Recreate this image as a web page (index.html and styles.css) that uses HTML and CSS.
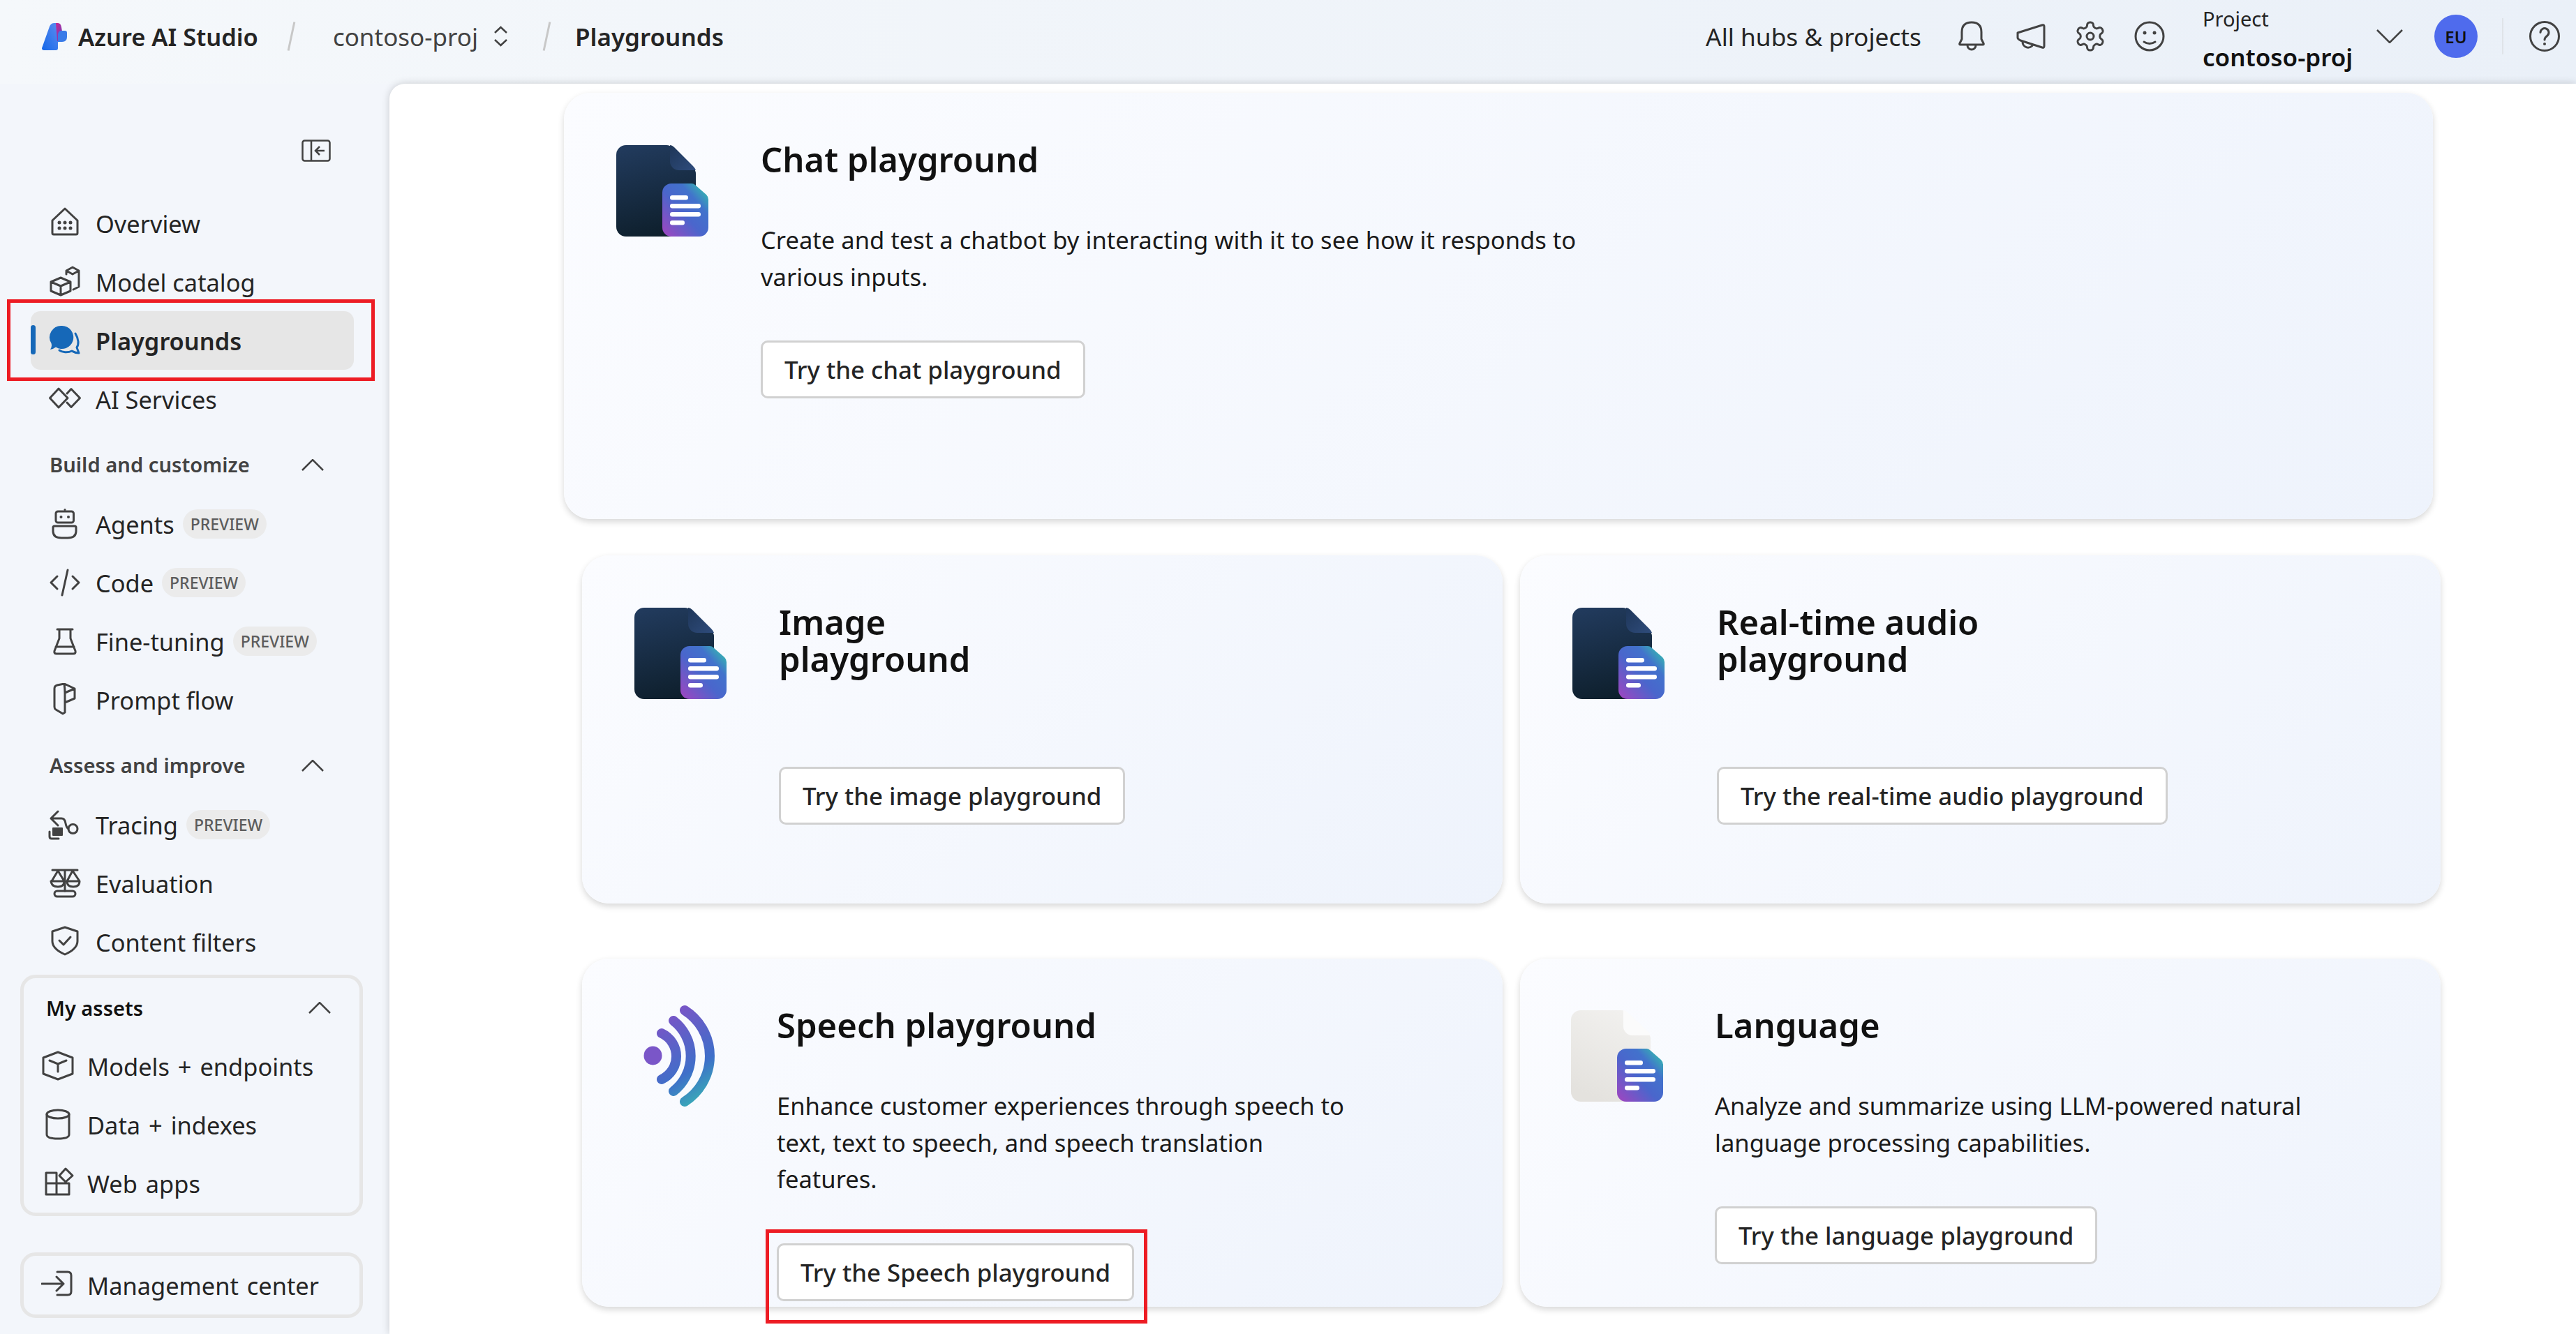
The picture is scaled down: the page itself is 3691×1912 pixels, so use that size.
FILE: index.html
```html
<!DOCTYPE html>
<html lang="en">
<head>
    <meta charset="UTF-8">
    <title>Playgrounds - Azure AI Studio</title>
    <link rel="stylesheet" href="styles.css">
</head>
<body>
    <svg class="defs" width="0" height="0" aria-hidden="true">
        <defs>
            <linearGradient id="logoBlue" x1="0" y1="1" x2="1" y2="0">
                <stop offset="0" stop-color="#1668e8"/>
                <stop offset="1" stop-color="#5a8cf0"/>
            </linearGradient>
            <linearGradient id="logoPink" x1="0" y1="0" x2="1" y2="1">
                <stop offset="0" stop-color="#c9268f"/>
                <stop offset="1" stop-color="#6a3fc0"/>
            </linearGradient>
            <linearGradient id="darkPage" x1="0.3" y1="0" x2="0.5" y2="1">
                <stop offset="0" stop-color="#213a5c"/>
                <stop offset="1" stop-color="#0e1f2c"/>
            </linearGradient>
            <linearGradient id="darkFold" x1="0" y1="0" x2="1" y2="1">
                <stop offset="0" stop-color="#1e3658"/>
                <stop offset="1" stop-color="#2f4c7c"/>
            </linearGradient>
            <linearGradient id="grayPage" x1="0.8" y1="0" x2="0.4" y2="1">
                <stop offset="0" stop-color="#f2f1ef"/>
                <stop offset="1" stop-color="#e4e2de"/>
            </linearGradient>
            <linearGradient id="smallPage" x1="0" y1="1" x2="1" y2="0">
                <stop offset="0" stop-color="#a344c0"/>
                <stop offset="0.45" stop-color="#4a66cc"/>
                <stop offset="0.7" stop-color="#4272cc"/>
                <stop offset="0.92" stop-color="#35b8b0"/>
            </linearGradient>
            <linearGradient id="speechGrad" gradientUnits="userSpaceOnUse" x1="10" y1="20" x2="90" y2="140">
                <stop offset="0" stop-color="#7f52c6"/>
                <stop offset="0.65" stop-color="#3e6fc9"/>
                <stop offset="1" stop-color="#38b4b4"/>
            </linearGradient>
            <g id="smallDoc">
                <path d="M66 68 a13 13 0 0 1 13 -13 H108 q3 0 5 2 L129 71 q3 3 3 7 V118 a13 13 0 0 1 -13 13 H79 a13 13 0 0 1 -13 -13 Z" fill="url(#smallPage)"/>
                <rect x="77" y="72" width="26" height="6.5" rx="3.2" fill="#fff"/>
                <rect x="77" y="84" width="44" height="6.5" rx="3.2" fill="#fff"/>
                <rect x="77" y="96" width="44" height="6.5" rx="3.2" fill="#fff"/>
                <rect x="77" y="108" width="21" height="6.5" rx="3.2" fill="#fff"/>
            </g>
        </defs>
    </svg>

    <header class="topbar">
        <svg class="logo" viewBox="0 0 36 39">
            <path d="M0 36 L11 5 Q13 0 18 0 H23 V36 Q23 39 20 39 H3 Q0 39 0 36 Z" fill="url(#logoBlue)"/>
            <path d="M20 0 H23 Q27 0 28 6 L29 12 L24 15 V26 H22 Z" fill="url(#logoPink)"/>
            <path d="M28 11 H33 Q36 11 36 14 V20 Q36 27 29 27 H23 V16 Q24 11 28 11 Z" fill="#3a7be8"/>
        </svg>
        <span class="brand">Azure AI Studio</span>
        <span class="slash"></span>
        <span class="crumb">contoso-proj</span>
        <svg class="updown" viewBox="0 0 21 30"><path d="M2 10 L10.500 2 L19 10 M2 20 L10.500 28 L19 20"/></svg>
        <span class="slash slash-two"></span>
        <span class="crumb-current">Playgrounds</span>

        <div class="topbar-right">
            <span class="hubs">All hubs &amp; projects</span>
            <div class="top-icons">
                <svg class="icon" viewBox="0 0 48 48"><path d="M8 36 Q6 36 7 34 L10 28 V18 Q10 4 24 4 Q38 4 38 18 V28 L41 34 Q42 36 40 36 Z M18 37 A6 6 0 0 0 30 37"/></svg>
                <svg class="icon" viewBox="0 0 48 48"><path d="M5 19 L40 8 Q43 7 43 10 V38 Q43 41 40 40 L9 30 Q5 28 5 26 Z M12 32 A8 8 0 0 0 27 36"/></svg>
                <svg class="icon" viewBox="0 0 24 24"><path class="thin" d="M12.220 2h-.44a2 2 0 0 0-2 2v.18a2 2 0 0 1-1 1.730l-.43.25a2 2 0 0 1-2 0l-.15-.08a2 2 0 0 0-2.730.73l-.22.38a2 2 0 0 0 .73 2.730l.15.1a2 2 0 0 1 1 1.720v.51a2 2 0 0 1-1 1.740l-.15.09a2 2 0 0 0-.73 2.730l.22.38a2 2 0 0 0 2.730.73l.15-.08a2 2 0 0 1 2 0l.43.25a2 2 0 0 1 1 1.730V20a2 2 0 0 0 2 2h.44a2 2 0 0 0 2-2v-.18a2 2 0 0 1 1-1.730l.43-.25a2 2 0 0 1 2 0l.15.08a2 2 0 0 0 2.730-.73l.22-.39a2 2 0 0 0-.73-2.730l-.15-.08a2 2 0 0 1-1-1.740v-.5a2 2 0 0 1 1-1.740l.15-.09a2 2 0 0 0 .73-2.730l-.22-.38a2 2 0 0 0-2.730-.73l-.15.08a2 2 0 0 1-2 0l-.43-.25a2 2 0 0 1-1-1.730V4a2 2 0 0 0-2-2z"/><circle class="thin" cx="12" cy="12" r="2.500"/></svg>
                <svg class="icon" viewBox="0 0 48 48"><circle cx="24" cy="24" r="20"/><path d="M16 32 Q24 37 32 32"/><circle class="solid" cx="17" cy="19" r="2.500"/><circle class="solid" cx="31" cy="19" r="2.500"/></svg>
            </div>
            <div class="project">
                <span class="project-label">Project</span>
                <span class="project-name">contoso-proj</span>
            </div>
            <svg class="project-chevron" viewBox="0 0 38 20"><path d="M1 1 L19 19 L37 1"/></svg>
            <span class="avatar">EU</span>
            <span class="top-divider"></span>
            <svg class="icon help" viewBox="0 0 48 48"><circle cx="24" cy="24" r="20.500"/><path d="M18 18.500 a6 6 0 1 1 9.500 5 q-3.500 2.500 -3.500 5.500"/><circle class="solid" cx="24" cy="35" r="2"/></svg>
        </div>
    </header>

    <div class="layout">
        <nav class="sidebar">
            <div class="collapse-row">
                <svg class="collapse" viewBox="0 0 42 32"><rect x="1.500" y="1.500" width="39" height="29" rx="3"/><path d="M14 2 V30 M33 16 H21 M26 10 L20 16 L26 22"/></svg>
            </div>

            <a class="nav-item"><svg class="icon" viewBox="0 0 48 48"><path d="M6 20 L24 3 L42 20 V38 a2 2 0 0 1 -2 2 H8 a2 2 0 0 1 -2 -2 Z"/><g class="dots"><circle class="solid" cx="16" cy="23" r="2.500"/><circle class="solid" cx="24" cy="23" r="2.500"/><circle class="solid" cx="32" cy="23" r="2.500"/><circle class="solid" cx="16" cy="31" r="2.500"/><circle class="solid" cx="24" cy="31" r="2.500"/><circle class="solid" cx="32" cy="31" r="2.500"/></g></svg>Overview</a>
            <a class="nav-item"><svg class="icon" viewBox="0 0 48 48"><path d="M18 18 L32 24 V37 L18 43 L4 37 V24 Z M4 24 L18 30 L32 24 M18 30 V43 M26 13 V8 L35 3 L44 8 V31 L36 35 M26 8 L35 13 L44 8"/></svg>Model catalog</a>
            <a class="nav-item is-active"><svg class="icon" viewBox="0 0 48 48"><path class="chat-fill" d="M20 3 a16.500 16.500 0 1 1 -9 30.500 q-4 3 -8 3.500 q3 -4 1.500 -9 A16.500 16.500 0 0 1 20 3 Z"/><path class="chat-line" d="M39 14 C44 22 44 30 41 34 L44 42 C38 42 36 40 34 39 C28 42 20 41 16 38"/></svg>Playgrounds</a>
            <a class="nav-item"><svg class="icon" viewBox="0 0 48 48"><path d="M15 9 L28 22.500 L15 36 L2.500 22.500 Z M27 16 L33 9.500 L45.500 22.500 L33 35.500 L27 29"/></svg>AI Services</a>

            <div class="section-head"><span>Build and customize</span><svg class="chevron-up" viewBox="0 0 32 17"><path d="M1 16 L16 1 L31 16"/></svg></div>
            <a class="nav-item"><svg class="icon" viewBox="0 0 48 48"><rect x="11" y="6" width="25.500" height="16" rx="3"/><path d="M7 29 Q7 27 9 27 H38 Q40 27 40 29 V34 Q40 44 28 44 H19 Q7 44 7 34 Z"/><circle class="solid" cx="24" cy="3.500" r="1.500"/><circle class="solid" cx="18.500" cy="14" r="2"/><circle class="solid" cx="29" cy="14" r="2"/></svg>Agents<span class="pill">PREVIEW</span></a>
            <a class="nav-item"><svg class="icon" viewBox="0 0 48 48"><path d="M13 15 L4 24 L13 33 M35 15 L44 24 L35 33 M28 6 L20 42"/></svg>Code<span class="pill">PREVIEW</span></a>
            <a class="nav-item"><svg class="icon" viewBox="0 0 48 48"><path d="M13 7 H35 M16 7 V20 L9 38 Q8 42 12 42 H36 Q40 42 39 38 L32 20 V7 M11 32 H37"/></svg>Fine-tuning<span class="pill">PREVIEW</span></a>
            <a class="nav-item"><svg class="icon" viewBox="0 0 48 48"><path d="M21 44 L11 38 Q9 37 9 34 V8 Q9 4 13 3 L23 1 L38 8 V22 L24 28 M24 14 L38 8 M24 14 V42 L21 44 M23 1 Q24 8 24 14"/></svg>Prompt flow</a>

            <div class="section-head"><span>Assess and improve</span><svg class="chevron-up" viewBox="0 0 32 17"><path d="M1 16 L16 1 L31 16"/></svg></div>
            <a class="nav-item"><svg class="icon" viewBox="0 0 48 48"><path d="M14 5 L4 15 L14 25 M4 15 H19 Q24 15 25 22 Q26 28 29 30 M2 34 V41 Q2 44 5 44 H15"/><circle cx="35.500" cy="30" r="6.500"/><rect class="solid" x="6" y="28" width="15" height="12" rx="1"/></svg>Tracing<span class="pill">PREVIEW</span></a>
            <a class="nav-item"><svg class="icon" viewBox="0 0 48 48"><path d="M6 5 H42 M24 5 V35 M14 6 L5 21 H23 Z M35 6 L27 21 H45 Z M4 21 Q5 29 14 29 Q23 29 23 21 M27 21 Q27 29 36 29 Q45 29 45 21"/><rect x="9" y="35" width="30" height="8" rx="4"/></svg>Evaluation</a>
            <a class="nav-item"><svg class="icon" viewBox="0 0 48 48"><path d="M24 3 L42 9 V23 Q42 34 24 42 Q6 34 6 23 V9 Z M16 22 L22 28 L32 17"/></svg>Content filters</a>

            <div class="asset-box">
                <div class="asset-head"><span>My assets</span><svg class="chevron-up" viewBox="0 0 32 17"><path d="M1 16 L16 1 L31 16"/></svg></div>
                <a class="asset-item"><svg class="icon" viewBox="0 0 48 48"><path d="M24 4 L45 12 V35 L24 43 L3 35 V12 Z M12 16 L24 21 L36 16 M24 21 V32"/></svg>Models + endpoints</a>
                <a class="asset-item"><svg class="icon" viewBox="0 0 48 48"><ellipse cx="24" cy="9" rx="16" ry="6"/><path d="M8 9 V38 Q8 44 24 44 Q40 44 40 38 V9"/></svg>Data + indexes</a>
                <a class="asset-item"><svg class="icon" viewBox="0 0 48 48"><path d="M7 9 H22 V40 H7 Z M7 24 H40 V40 H22 M35 3 L45 13 L35 22 L26 13 Z"/></svg>Web apps</a>
            </div>
            <div class="asset-box manage-box">
                <a class="asset-item"><svg class="icon" viewBox="0 0 48 48"><path d="M23 5 H38 Q43 5 43 10 V33 Q43 38 38 38 H23 M1 22 H32 M22 12 L32 22 L22 32"/></svg>Management center</a>
            </div>
        </nav>

        <main class="content">
            <section class="card card-chat">
                <svg class="doc-icon" viewBox="0 0 132 131">
                    <path d="M0 14 a14 14 0 0 1 14 -14 H72 q5 0 9 4 L110 32 q4 4 4 9 V117 a14 14 0 0 1 -14 14 H14 a14 14 0 0 1 -14 -14 Z" fill="url(#darkPage)"/>
                    <path d="M77 0 q3 0 6 3 L110 30 q3 3 4 6 H90 a13 13 0 0 1 -13 -13 Z" fill="url(#darkFold)"/>
                    <use href="#smallDoc"/>
                </svg>
                <div class="card-body">
                    <h2>Chat playground</h2>
                    <p>Create and test a chatbot by interacting with it to see how it responds to<br>various inputs.</p>
                    <a class="try-btn">Try the chat playground</a>
                </div>
            </section>

            <div class="card-grid">
                <section class="card">
                    <svg class="doc-icon" viewBox="0 0 132 131">
                        <path d="M0 14 a14 14 0 0 1 14 -14 H72 q5 0 9 4 L110 32 q4 4 4 9 V117 a14 14 0 0 1 -14 14 H14 a14 14 0 0 1 -14 -14 Z" fill="url(#darkPage)"/>
                        <path d="M77 0 q3 0 6 3 L110 30 q3 3 4 6 H90 a13 13 0 0 1 -13 -13 Z" fill="url(#darkFold)"/>
                        <use href="#smallDoc"/>
                    </svg>
                    <div class="card-body">
                        <h2>Image<br>playground</h2>
                        <a class="try-btn">Try the image playground</a>
                    </div>
                </section>
                <section class="card">
                    <svg class="doc-icon" viewBox="0 0 132 131">
                        <path d="M0 14 a14 14 0 0 1 14 -14 H72 q5 0 9 4 L110 32 q4 4 4 9 V117 a14 14 0 0 1 -14 14 H14 a14 14 0 0 1 -14 -14 Z" fill="url(#darkPage)"/>
                        <path d="M77 0 q3 0 6 3 L110 30 q3 3 4 6 H90 a13 13 0 0 1 -13 -13 Z" fill="url(#darkFold)"/>
                        <use href="#smallDoc"/>
                    </svg>
                    <div class="card-body">
                        <h2>Real-time audio<br>playground</h2>
                        <a class="try-btn">Try the real-time audio playground</a>
                    </div>
                </section>
                <section class="card card-low">
                    <svg class="speech-icon" viewBox="0 0 102 147">
                        <g fill="none" stroke="url(#speechGrad)" stroke-width="14" stroke-linecap="round">
                            <path d="M59 8 A77.600 77.600 0 0 1 59 139"/>
                            <path d="M43 23 A64 64 0 0 1 43 124"/>
                            <path d="M26 41 A36.400 36.400 0 0 1 26 107"/>
                        </g>
                        <ellipse cx="13.500" cy="73" rx="13" ry="13.500" fill="#7a56c8"/>
                    </svg>
                    <div class="card-body">
                        <h2>Speech playground</h2>
                        <p>Enhance customer experiences through speech to<br>text, text to speech, and speech translation<br>features.</p>
                        <a class="try-btn is-marked">Try the Speech playground</a>
                    </div>
                </section>
                <section class="card card-low">
                    <svg class="doc-icon doc-gray" viewBox="0 0 132 131">
                        <path d="M0 14 a14 14 0 0 1 14 -14 H72 q5 0 9 4 L110 32 q4 4 4 9 V117 a14 14 0 0 1 -14 14 H14 a14 14 0 0 1 -14 -14 Z" fill="url(#grayPage)"/>
                        <path d="M75 0 q3 0 6 3 L110 30 q3 3 4 6 H88 a13 13 0 0 1 -13 -13 Z" fill="#fbfbfb"/>
                        <use href="#smallDoc"/>
                    </svg>
                    <div class="card-body">
                        <h2>Language</h2>
                        <p>Analyze and summarize using LLM-powered natural<br>language processing capabilities.</p>
                        <a class="try-btn">Try the language playground</a>
                    </div>
                </section>
            </div>
        </main>
    </div>
</body>
</html>
```

FILE: styles.css
```css
* {
    box-sizing: border-box;
}
html, body {
    margin: 0;
    height: 100%;
}
body {
    display: flex;
    flex-direction: column;
    overflow: hidden;
    font-family: "Noto Sans", "Open Sans", sans-serif;
    font-size: 34.4px;
    color: #242424;
    background-color: #f3f6fb;
}
.defs {
    position: absolute;
}

/* icons */
.icon {
    width: 48px;
    height: 48px;
    flex: none;
    fill: none;
    stroke: #424242;
    stroke-width: 3;
    stroke-linejoin: round;
    stroke-linecap: round;
}
.icon .solid {
    fill: #424242;
    stroke: none;
}
.icon .thin {
    stroke-width: 1.5;
}
.chevron-up, .updown, .project-chevron, .collapse {
    flex: none;
    fill: none;
    stroke: #424242;
    stroke-width: 2.5;
}

/* top bar */
.topbar {
    height: 120px;
    flex: none;
    display: flex;
    align-items: center;
    padding: 0 0 16px 60px;
    background: linear-gradient(90deg, #f5f8fb, #eaf0f8);
}
.logo {
    width: 36px;
    height: 39px;
    margin-right: 16px;
}
.brand {
    font-weight: 600;
    font-size: 34.5px;
    color: #242424;
}
.slash {
    width: 3px;
    height: 42px;
    margin: 0 58px 0 46px;
    background-color: #c8c8c8;
    transform: rotate(12deg);
}
.slash-two {
    margin: 0 39px 0 54px;
}
.crumb {
    font-size: 35px;
    color: #424242;
}
.updown {
    width: 21px;
    height: 30px;
    margin-left: 22px;
}
.crumb-current {
    font-size: 35px;
    font-weight: 600;
}
.topbar-right {
    margin-left: auto;
    display: flex;
    align-items: center;
    padding-right: 21px;
}
.hubs {
    font-size: 35.3px;
    margin-right: 48px;
}
.top-icons {
    display: flex;
    gap: 37px;
    margin-right: 52px;
}
.project {
    display: flex;
    flex-direction: column;
    width: 249px;
    padding-top: 8px;
}
.project-label {
    font-size: 29px;
    line-height: 44px;
}
.project-name {
    font-size: 35px;
    font-weight: 600;
    line-height: 50px;
    margin-top: 8px;
    color: #111;
}
.project-chevron {
    width: 38px;
    height: 20px;
    margin-right: 45px;
}
.avatar {
    width: 62px;
    height: 62px;
    display: flex;
    align-items: center;
    justify-content: center;
    border-radius: 50%;
    background-color: #4f6bed;
    font-size: 24px;
    font-weight: 600;
    color: #111;
}
.top-divider {
    width: 2px;
    height: 52px;
    margin: 0 35px;
    background-color: #dfe3e8;
}

/* sidebar */
.layout {
    flex: 1;
    display: flex;
    min-height: 0;
}
.sidebar {
    width: 558px;
    flex: none;
    display: flex;
    flex-direction: column;
    align-items: flex-start;
}
.collapse-row {
    width: 474px;
    height: 158px;
    padding-top: 80px;
    display: flex;
    justify-content: flex-end;
}
.collapse {
    width: 42px;
    height: 32px;
}
.nav-item {
    position: relative;
    width: 463px;
    height: 84px;
    margin-left: 44px;
    padding-left: 25px;
    flex: none;
    display: flex;
    align-items: center;
    gap: 20px;
}
.nav-item.is-active {
    font-weight: 600;
    background-color: #e6e6e6;
    border-radius: 14px;
}
.nav-item.is-active::before {
    content: "";
    position: absolute;
    left: 0;
    top: 20px;
    width: 7px;
    height: 42px;
    border-radius: 4px;
    background-color: #1668b8;
}
/* red callout drawn round the step being explained */
.nav-item.is-active::after {
    content: "";
    position: absolute;
    inset: -17px -30px -16px -34px;
    border: 5px solid #ed1c24;
    pointer-events: none;
}
.chat-fill {
    fill: #1668b8;
    stroke: none;
}
.chat-line {
    stroke: #1668b8;
}
.pill {
    margin-left: -8px;
    height: 42px;
    padding: 0 11px;
    display: flex;
    align-items: center;
    border-radius: 21px;
    background-color: #ebebeb;
    font-size: 23px;
    font-weight: 500;
    color: #5c5c5c;
}
.section-head {
    width: 393px;
    height: 70px;
    margin: 17px 0 8px 71px;
    flex: none;
    display: flex;
    align-items: center;
    justify-content: space-between;
    font-size: 29.2px;
    font-weight: 600;
    color: #424242;
}
.chevron-up {
    width: 32px;
    height: 17px;
}
.asset-box {
    width: 491px;
    margin: 5px 0 0 29px;
    flex: none;
    border: 5px solid #e6e6e6;
    border-radius: 22px;
}
.manage-box {
    margin-top: 52px;
    height: 94px;
    display: flex;
    align-items: center;
}
.asset-head {
    height: 84px;
    padding: 0 41px 0 32px;
    display: flex;
    align-items: center;
    justify-content: space-between;
    font-size: 29px;
    font-weight: 600;
    color: #111;
}
.asset-item {
    height: 84px;
    padding-left: 25px;
    display: flex;
    align-items: center;
    gap: 18px;
    word-spacing: 3px;
}

/* main panel */
.content {
    flex: 1;
    min-width: 0;
    padding-top: 13px;
    background-color: #fff;
    border-top-left-radius: 22px;
    box-shadow: 0 0 12px rgba(0, 0, 0, 0.18);
    overflow: hidden;
}
.card {
    display: flex;
    padding: 69px 60px 0 75px;
    border-radius: 38px;
    background: linear-gradient(135deg, #fbfcff, #eef3fc);
    box-shadow: 0 4px 10px rgba(0, 0, 0, 0.16);
}
.card-chat {
    width: 2678px;
    height: 611px;
    margin-left: 250px;
}
.card-grid {
    width: 2664px;
    margin: 52px 0 0 276px;
    display: grid;
    grid-template-columns: 1319px 1319px;
    grid-auto-rows: 499px;
    column-gap: 25px;
    row-gap: 79px;
}
.card-low {
    padding-left: 73px;
}
.doc-icon {
    width: 132px;
    height: 131px;
    flex: none;
    margin: 6px 75px 0 0;
}
.doc-gray {
    margin-top: 5px;
    margin-right: 74px;
}
.speech-icon {
    width: 102px;
    height: 147px;
    flex: none;
    margin: -3px 89px 0 15px;
}
.card h2 {
    margin: 0 0 63px;
    font-size: 49px;
    font-weight: 600;
    line-height: 53px;
    color: #111;
}
.card p {
    margin: 0 0 65px;
    font-size: 34.6px;
    line-height: 52.5px;
    white-space: nowrap;
    color: #1a1a1a;
}
/* cards with no description still keep the gap above the button */
.card h2 + .try-btn {
    margin-top: 65px;
}
.try-btn {
    position: relative;
    height: 83px;
    padding: 0 31px;
    display: inline-flex;
    align-items: center;
    background-color: #fff;
    border: 3px solid #d1d1d1;
    border-radius: 10px;
    font-size: 34.8px;
    font-weight: 500;
    color: #242424;
}
.try-btn.is-marked::after {
    content: "";
    position: absolute;
    inset: -23px -22px -35px -19px;
    border: 5px solid #ed1c24;
    pointer-events: none;
}
```
